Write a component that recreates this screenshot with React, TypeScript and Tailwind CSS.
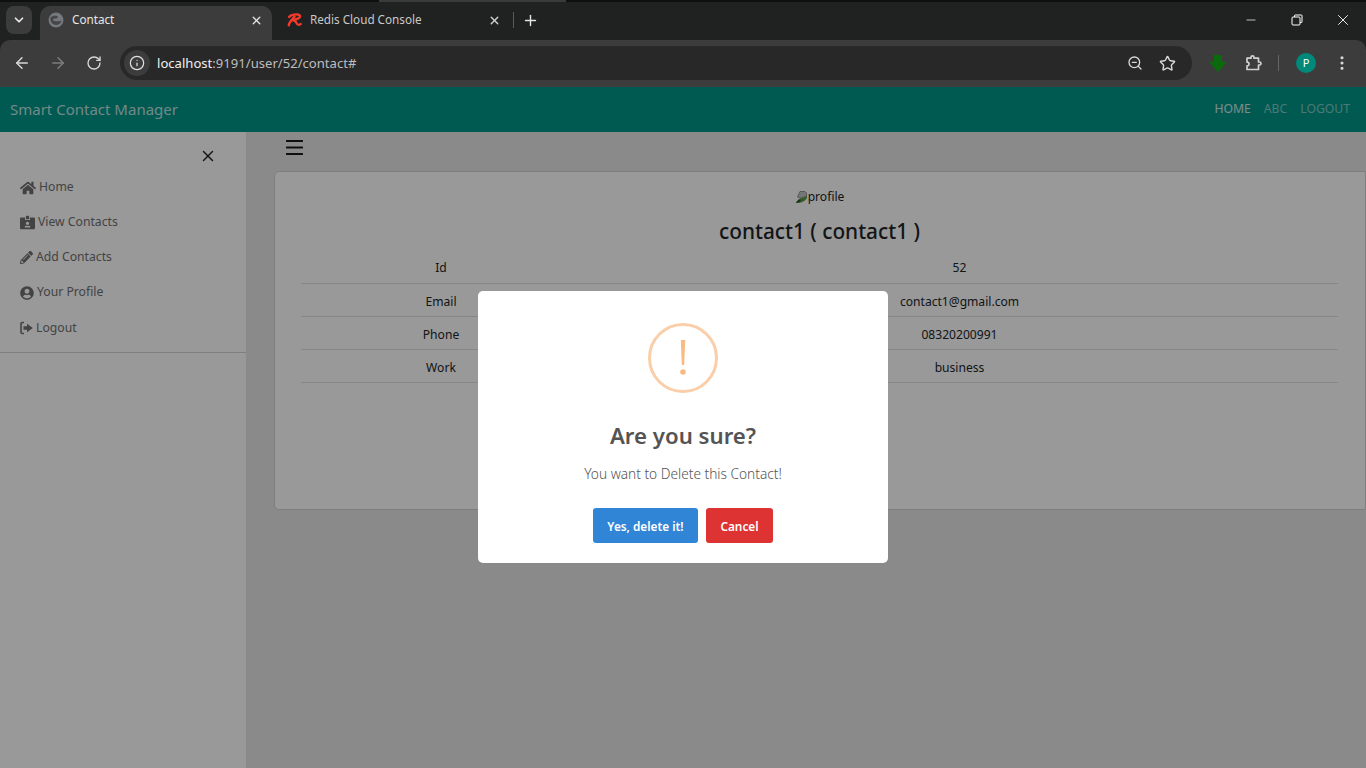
import React from "react";
import { FaHome, FaIdCardAlt, FaPencilAlt, FaUserCircle } from "react-icons/fa";
import { ArrowLeft, ArrowRight, RotateCw, Info, ZoomOut, Star, EllipsisVertical, ChevronDown, X, Plus, Minus } from "lucide-react";

const FONT = "font-['Noto_Sans','Open_Sans',sans-serif]";

function Globe() {
  return (
    <svg width="16" height="16" viewBox="0 0 16 16" className="shrink-0">
      <circle cx="8" cy="8" r="7.500" fill="#75787c" />
      <path d="M2.500 5.500C4 3.800 7 3.200 9 4c1.500.6 1 2-.5 2.300C7 6.600 5.500 6.500 5 7.500c-.4.900.8 1.500 2.500 1.800 2 .3 3.500-.4 6-.6-.6 2.300-2.500 4-5 4.300C6 13 3.800 11.500 3 9.500 2.600 8.300 2.300 6.800 2.500 5.500z" fill="#45474a" />
    </svg>
  );
}

function RedisLogo() {
  return (
    <svg width="16" height="14" viewBox="0 0 16 14" className="shrink-0" fill="none" stroke="#f3392c" strokeLinecap="round" strokeLinejoin="round">
      <path d="M2 4C4 2 7.500 1.300 10.500 1.500 13.500 1.800 14 3.500 12 5 10.500 6.100 8 6.700 5.500 7" strokeWidth="2.300" />
      <path d="M7.500 3.500 3.500 8.500C2.500 9.800 2 11 1.800 12.300" strokeWidth="2.500" />
      <path d="M6 7.300C8.500 7.300 9 9 9.800 10.500 10.500 12 12 12.200 13.800 11" strokeWidth="2.200" />
    </svg>
  );
}

function BrokenImage() {
  return (
    <svg width="14" height="15" viewBox="0 0 14 15" className="shrink-0">
      <path d="M5 1.500h5l1.500 1.500v3.500L5 8 2.500 7z" fill="#c2c6c6" stroke="#777" strokeWidth="0.700" />
      <path d="M1 13 C2 10 4 8.500 7 8 l5-2 v1.500 C11 11 7 13 1 13z" fill="#5a9a4c" />
      <path d="M1 13 C2.500 10.500 4.500 9.500 6.500 9.500 5 12 3 12.800 1 13z" fill="#234a25" />
    </svg>
  );
}

function Extension() {
  return (
    <svg width="18" height="18" viewBox="0 0 18 18" fill="none" stroke="#d0d0d0" strokeWidth="1.700" strokeLinejoin="round">
      <path d="M2 4.200h4V3.300a1.500 1.500 0 0 1 3 0v.9h4.500V8h1a1.500 1.500 0 0 1 0 3h-1v4.500H2v-3.600c1.300.1 2-.8 2-1.900S3.300 8.100 2 8.100z" />
    </svg>
  );
}

function LogoutIcon() {
  return (
    <svg width="13" height="14" viewBox="0 0 13 14" className="shrink-0">
      <path d="M4 1.500H2.300A1.300 1.300 0 0 0 1 2.800v8.400a1.300 1.300 0 0 0 1.300 1.300H4" fill="none" stroke="currentColor" strokeWidth="1.600" />
      <path d="M3.500 5.300H7V2.800L12.800 7 7 11.200V8.700H3.500z" fill="currentColor" />
    </svg>
  );
}

function BrowserChrome() {
  return (
    <div className="flex h-[87px] flex-col bg-[#202222] font-['Noto_Sans',sans-serif] text-[#e3e3e3]">
      <div className="flex h-[2px] justify-end bg-[#0f0f0f]">
        <div className="mr-[800px] w-[187px] bg-[#3a3a3a]" />
      </div>
      <div className="flex h-[38px] items-start pt-[4px]">
        <div className="ml-[6px] flex h-[28px] w-[26px] items-center justify-center rounded-lg bg-[#3c3c3c]">
          <ChevronDown size={14} strokeWidth={3} color="#e8e8e8" />
        </div>
        <div className="ml-[8px] flex h-[34px] w-[232px] items-center rounded-t-[10px] bg-[#3c3c3c] pb-[6px] pl-[8px] pr-[9px] text-[11.700px]">
          <Globe />
          <span className="ml-[8px] flex-1 text-[#e6e6e6]">Contact</span>
          <X size={13} strokeWidth={2.500} color="#e3e3e3" />
        </div>
        <div className="flex h-[34px] w-[242px] items-center pb-[6px] pl-[15px] pr-[0px] text-[11.700px]">
          <RedisLogo />
          <span className="ml-[7px] flex-1 text-[#c8c8c8]">Redis Cloud Console</span>
          <X size={13} strokeWidth={2.500} color="#d0d0d0" />
          <div className="ml-[12px] h-[16px] w-px bg-[#5a5a5a]" />
        </div>
        <div className="flex h-[28px] w-[33px] items-center justify-center">
          <Plus size={17} strokeWidth={2} color="#e3e3e3" />
        </div>
        <div className="flex-1" />
        <div className="flex h-[28px] items-center">
          <div className="flex w-[46px] justify-center"><Minus size={14} strokeWidth={1.200} color="#fff" /></div>
          <div className="flex w-[46px] justify-center">
            <svg width="12" height="12" viewBox="0 0 12 12" fill="none" stroke="#fff" strokeWidth="1">
              <rect x="1" y="3" width="8" height="8" rx="1" />
              <path d="M3.500 3V1.500a.5.5 0 0 1 .5-.5h6.500a.5.5 0 0 1 .5.5V8a.5.5 0 0 1-.5.5H9" />
            </svg>
          </div>
          <div className="flex w-[46px] justify-center"><X size={18} strokeWidth={1.200} color="#fff" /></div>
        </div>
      </div>
      <div className="flex h-[47px] items-center rounded-t-[10px] bg-[#3c3c3c] pb-[1px]">
        <div className="flex w-[120px] items-center pl-[13px]">
          <ArrowLeft size={18} strokeWidth={2} color="#d8d8d8" />
          <ArrowRight size={18} strokeWidth={2} color="#7c7c7c" className="ml-[18px]" />
          <RotateCw size={16} strokeWidth={2} color="#d8d8d8" className="ml-[19px]" />
        </div>
        <div className="flex h-[34px] w-[1072px] items-center rounded-full bg-[#282828] pl-[4px] pr-[16px]">
          <div className="flex h-[26px] w-[26px] items-center justify-center rounded-full bg-[#3c3c3c]">
            <Info size={16} strokeWidth={1.800} color="#e3e3e3" />
          </div>
          <span className="ml-[7px] flex-1 pt-[1px] text-[13.100px]">
            <span className="text-[#f0f0f0]">localhost</span>
            <span className="text-[#bdbdbd]">:9191/user/52/contact#</span>
          </span>
          <ZoomOut size={16} strokeWidth={2} color="#d8d8d8" />
          <Star size={17} strokeWidth={2} color="#d8d8d8" className="ml-[16px]" />
        </div>
        <div className="flex flex-1 items-center pl-[17px]">
          <svg width="18" height="17" viewBox="0 0 18 17"><path d="M5 0h8v7h5l-9 10L0 7h5z" fill="#0b6a0b" /></svg>
          <div className="ml-[18px]"><Extension /></div>
          <div className="ml-[15px] h-[16px] w-px bg-[#666]" />
          <div className="ml-[17px] flex h-[20px] w-[20px] items-center justify-center rounded-full bg-[#00897b] text-[11px] text-white">P</div>
          <EllipsisVertical size={18} strokeWidth={2.200} color="#d8d8d8" className="ml-[17px]" />
        </div>
      </div>
    </div>
  );
}

const sideItems = [
  { icon: <FaHome size={16} />, label: "Home", h: "h-[35px]" },
  { icon: <FaIdCardAlt size={15} />, label: "View Contacts", h: "h-[35px]" },
  { icon: <FaPencilAlt size={13} />, label: "Add Contacts", h: "h-[35px]" },
  { icon: <FaUserCircle size={14} />, label: "Your Profile", h: "h-[35px]" },
  { icon: <LogoutIcon />, label: "Logout", h: "h-[36px]" },
];

const rows = [
  ["Id", "52"],
  ["Email", "contact1@gmail.com"],
  ["Phone", "08320200991"],
  ["Work", "business"],
];

export default function App() {
  return (
    <div className={`relative flex h-screen flex-col overflow-hidden ${FONT}`}>
      <BrowserChrome />
      <div className="relative flex min-h-0 flex-1 flex-col bg-[#e6e6e6]">
        <nav className="flex h-[45px] shrink-0 items-center justify-between bg-[#009688] pl-[10px] pr-[16px]">
          <span className="text-[15px] text-white/75">Smart Contact Manager</span>
          <div className="flex gap-[13px] text-[12.200px]">
            <span className="text-white/80">HOME</span>
            <span className="text-white/50">ABC</span>
            <span className="text-white/50">LOGOUT</span>
          </div>
        </nav>
        <div className="flex min-h-0 flex-1">
          <aside className="w-[246px] shrink-0 bg-white">
            <div className="border-b border-[#d4d4d4] pb-[6px]">
              <div className="flex h-[38px] items-end justify-end pb-[5px] pr-[29px]">
                <X size={18} strokeWidth={2} color="#222" />
              </div>
              {sideItems.map((it) => (
                <div key={it.label} className={`flex items-center pl-[20px] text-[12.200px] text-[#707070] ${it.h}`}>
                  {it.icon}
                  <span className="ml-[3px]">{it.label}</span>
                </div>
              ))}
            </div>
          </aside>
          <main className="min-w-0 flex-1 pl-[28px]">
            <div className="flex h-[39px] items-start pl-[12px] pt-[8px]">
              <svg width="17" height="15" viewBox="0 0 17 15" fill="#1a1a1a">
                <rect y="0" width="17" height="2" rx="0.500" />
                <rect y="6.500" width="17" height="2" rx="0.500" />
                <rect y="13" width="17" height="2" rx="0.500" />
              </svg>
            </div>
            <div className="flex h-[339px] flex-col items-center rounded-l-[5px] border border-[#d2d2d2] bg-white pl-[26px] pr-[27px] text-[12.100px] text-[#212529]">
              <div className="mt-[16px] flex items-center">
                <BrokenImage />
                <span className="-ml-[1px]">profile</span>
              </div>
              <h2 className="mt-[10px] text-[20.800px] font-medium leading-[30px] text-[#212529]">contact1 ( contact1 )</h2>
              <table className="mt-[4px] w-full border-collapse">
                <tbody>
                  {rows.map(([a, b]) => (
                    <tr key={a} className="h-[33px] border-b border-[#dee2e6]">
                      <td className="w-[280px] pt-[4px] text-center">{a}</td>
                      <td className="pt-[4px] text-center">{b}</td>
                    </tr>
                  ))}
                </tbody>
              </table>
            </div>
          </main>
        </div>
        <div className="absolute inset-0 flex items-start justify-center bg-black/40">
          <div className="mt-[204px] flex h-[272px] w-[410px] flex-col items-center rounded-[5px] bg-white">
            <div className="mt-[32px] flex h-[70px] w-[70px] items-center justify-center rounded-full border-[3px] border-[#facea8]">
              <svg width="6" height="36" viewBox="0 0 6 36">
                <path d="M.8 0h4.400L4.200 25H1.800z" fill="#f8bb86" />
                <circle cx="3" cy="32" r="2.800" fill="#f8bb86" />
              </svg>
            </div>
            <h2 className="mt-[25px] text-[22.200px] font-semibold leading-[36px] text-[#545454]">Are you sure?</h2>
            <p className="mt-[10px] text-[13.700px] leading-[20px] font-light text-[#545454]">You want to Delete this Contact!</p>
            <div className="mt-[24px] flex gap-[8px]">
              <button className="flex h-[35px] w-[105px] items-center justify-center rounded-[3px] bg-[#3085d6] pt-[3px] text-[11.800px] font-semibold text-white">Yes, delete it!</button>
              <button className="flex h-[35px] w-[67px] items-center justify-center rounded-[3px] bg-[#dd3333] pt-[3px] text-[11.800px] font-semibold text-white">Cancel</button>
            </div>
          </div>
        </div>
      </div>
    </div>
  );
}
